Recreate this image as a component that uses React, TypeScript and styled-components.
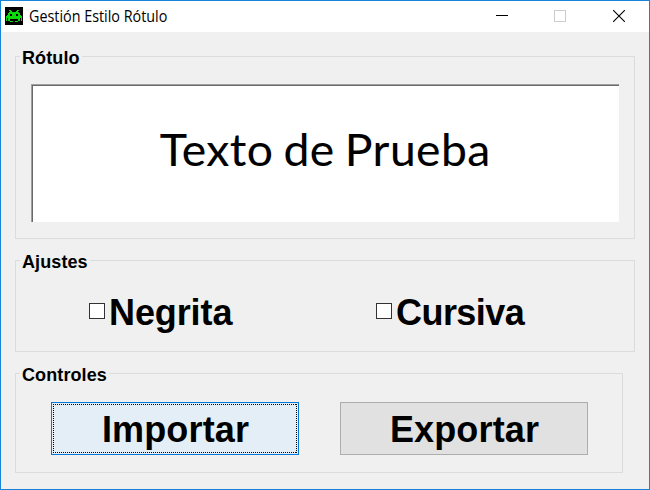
import React from "react";
import styled, { createGlobalStyle } from "styled-components";

const GlobalStyle = createGlobalStyle`
  * { box-sizing: border-box; }
  body { margin: 0; background: #f0f0f0; overflow: hidden; }
`;

const Window = styled.main`
  width: 650px;
  height: 490px;
  border: 1px solid #1883d7;
  background: #f0f0f0;
  color: #000;
  font-family: "Liberation Sans", Arial, sans-serif;
`;

const TitleBar = styled.header`
  display: flex;
  height: 31px;
  padding: 0 24px 0 4px;
  background: #fff;
`;

const AppIcon = styled.svg`
  display: block;
  flex: none;
  width: 18px;
  height: 18px;
  margin-top: 6px;
`;

const Title = styled.h1`
  flex: 1;
  margin: 0 0 0 6px;
  font: 400 15.5px/31px "Open Sans", "Noto Sans", sans-serif;
  white-space: nowrap;
  transform: scaleX(0.925);
  transform-origin: left center;
`;

const WindowControls = styled.div`
  display: grid;
  grid-template-columns: 58px 59px 12px;
  margin-top: 9px;
`;

const ControlIcon = styled.svg`
  display: block;
  width: 12px;
  height: 12px;
  fill: none;
`;

const Content = styled.div`
  display: flex;
  flex-direction: column;
  align-items: flex-start;
  gap: 21px;
  padding: 24px 14px 0;
`;

const Group = styled.section<{ $width: number; $height: number }>`
  width: ${(p) => p.$width}px;
  height: ${(p) => p.$height}px;
  border: 1px solid #dcdcdc;
`;

const GroupTitle = styled.h2`
  width: max-content;
  height: 20px;
  margin: -10px 0 0 4px;
  padding: 0 2px;
  background: #f0f0f0;
  font-size: 18px;
  font-weight: 700;
  letter-spacing: 0.1px;
  line-height: 22px;
`;

const Preview = styled.div`
  display: flex;
  justify-content: center;
  width: 588px;
  height: 138px;
  margin: 17px 0 0 15px;
  border: solid #a0a0a0;
  border-width: 1px 0 0 1px;
  box-shadow: inset 1px 1px #696969;
  background: #fff;
`;

const PreviewText = styled.span`
  font: 400 44.5px/128px Lato, "Open Sans", sans-serif;
  letter-spacing: 0.4px;
  word-spacing: -2px;
  transform: scaleX(1.04);
  -webkit-text-stroke: 0.1px #000;
  white-space: nowrap;
`;

const Options = styled.div`
  display: grid;
  grid-template-columns: 287px 1fr;
  padding: 20px 0 0 73px;
`;

const Option = styled.label`
  display: flex;
  align-items: center;
  gap: 4px;
  height: 40px;
  font-size: 36px;
  font-weight: 700;
  line-height: 40px;
`;

const CheckBox = styled.input`
  appearance: none;
  width: 16px;
  height: 16px;
  margin: 0;
  border: 1px solid #333;
  background: #fff;
`;

const OptionText = styled.span<{ $tracking: number }>`
  margin-top: 3px;
  letter-spacing: ${(p) => p.$tracking}px;
`;

const Actions = styled.div`
  display: flex;
  gap: 41px;
  padding: 18px 0 0 35px;
`;

const ActionButton = styled.button<{ $focused?: boolean }>`
  width: 248px;
  height: 53px;
  padding: 1px;
  border: 1px solid ${(p) => (p.$focused ? "#0078d7" : "#adadad")};
  background: ${(p) => (p.$focused ? "#e4eef7" : "#e1e1e1")};
  color: #000;
  font: 700 36px/49px "Liberation Sans", Arial, sans-serif;
  letter-spacing: 0.15px;
`;

const ButtonFace = styled.span<{ $focused?: boolean }>`
  display: block;
  height: 49px;
  padding: 1px 0 0 1px;
  ${(p) =>
    p.$focused &&
    `background:
      repeating-linear-gradient(90deg, #000 0 1px, transparent 1px 2px) 0 0 / 100% 1px no-repeat,
      repeating-linear-gradient(90deg, #000 0 1px, transparent 1px 2px) 0 100% / 100% 1px no-repeat,
      repeating-linear-gradient(#000 0 1px, transparent 1px 2px) 0 0 / 1px 100% no-repeat,
      repeating-linear-gradient(#000 0 1px, transparent 1px 2px) 100% 0 / 1px 100% no-repeat;`}
`;

const invaderRows = [
  "...##......##...",
  "....##....##....",
  "...##########...",
  "..############..",
  "..##..####..##..",
  ".###..####..###.",
  "################",
  "################",
  "#.############.#",
  "#.##........##.#",
  "#.##........##.#",
  "....###..###....",
];

const invaderPath = invaderRows
  .flatMap((row, y) => [...row].map((c, x) => (c === "#" ? `M${x} ${y}h1v1h-1z` : "")))
  .join("");

export default function App() {
  return (
    <>
      <GlobalStyle />
      <Window>
        <TitleBar>
          <AppIcon viewBox="0 0 18 18">
            <rect width="18" height="18" fill="#000" />
            <path d={invaderPath} fill="#0bdc0b" transform="translate(1 3)" />
          </AppIcon>
          <Title>Gestión Estilo Rótulo</Title>
          <WindowControls>
            <ControlIcon viewBox="0 0 12 12" stroke="#000">
              <path d="M0 5.5h12" />
            </ControlIcon>
            <ControlIcon viewBox="0 0 12 12" stroke="#ccc">
              <path d="M.5.5h11v11H.5z" />
            </ControlIcon>
            <ControlIcon viewBox="0 0 12 12" stroke="#000" strokeWidth="1.1">
              <path d="M0 0l12 12M12 0L0 12" />
            </ControlIcon>
          </WindowControls>
        </TitleBar>
        <Content>
          <Group $width={620} $height={183}>
            <GroupTitle>Rótulo</GroupTitle>
            <Preview>
              <PreviewText>Texto de Prueba</PreviewText>
            </Preview>
          </Group>
          <Group $width={620} $height={92}>
            <GroupTitle>Ajustes</GroupTitle>
            <Options>
              <Option>
                <CheckBox type="checkbox" />
                <OptionText $tracking={-0.1}>Negrita</OptionText>
              </Option>
              <Option>
                <CheckBox type="checkbox" />
                <OptionText $tracking={-0.55}>Cursiva</OptionText>
              </Option>
            </Options>
          </Group>
          <Group $width={608} $height={100}>
            <GroupTitle>Controles</GroupTitle>
            <Actions>
              <ActionButton $focused>
                <ButtonFace $focused>Importar</ButtonFace>
              </ActionButton>
              <ActionButton>
                <ButtonFace>Exportar</ButtonFace>
              </ActionButton>
            </Actions>
          </Group>
        </Content>
      </Window>
    </>
  );
}
